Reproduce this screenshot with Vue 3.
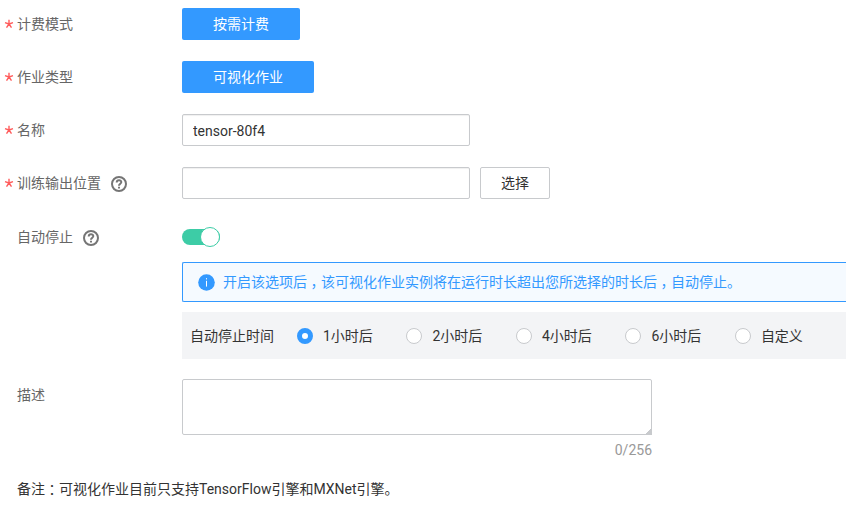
<script setup>
import { ref } from 'vue'

const name = ref('tensor-80f4')
const output = ref('')
const desc = ref('')
const stop = ref('1')
const options = [
  { value: '1', label: '1小时后' },
  { value: '2', label: '2小时后' },
  { value: '4', label: '4小时后' },
  { value: '6', label: '6小时后' },
  { value: 'custom', label: '自定义' },
]
</script>

<template>
  <main class="form">
    <div class="row">
      <div class="label"><svg class="star" viewBox="0 0 10 10"><path d="M5 5V.8M5 5L1 3.7M5 5L9 3.7M5 5L2.5 8.6M5 5L7.5 8.6" /></svg>计费模式</div>
      <button class="primary">按需计费</button>
    </div>
    <div class="row">
      <div class="label"><svg class="star" viewBox="0 0 10 10"><path d="M5 5V.8M5 5L1 3.7M5 5L9 3.7M5 5L2.5 8.6M5 5L7.5 8.6" /></svg>作业类型</div>
      <button class="primary">可视化作业</button>
    </div>
    <div class="row">
      <div class="label"><svg class="star" viewBox="0 0 10 10"><path d="M5 5V.8M5 5L1 3.7M5 5L9 3.7M5 5L2.5 8.6M5 5L7.5 8.6" /></svg>名称</div>
      <input v-model="name" class="input" />
    </div>
    <div class="row">
      <div class="label"><svg class="star" viewBox="0 0 10 10"><path d="M5 5V.8M5 5L1 3.7M5 5L9 3.7M5 5L2.5 8.6M5 5L7.5 8.6" /></svg>训练输出位置
        <svg class="help" viewBox="0 0 16 16"><circle cx="8" cy="8" r="7" /><path d="M5.7 6.5C5.7 3.3 10.4 3.5 10.3 6.3C10.2 7.7 8 7.8 8 9.7M8 10.8V12.6" /></svg>
      </div>
      <input v-model="output" class="input" />
      <button class="plain">选择</button>
    </div>
    <div class="row auto">
      <div class="label optional">自动停止
        <svg class="help" viewBox="0 0 16 16"><circle cx="8" cy="8" r="7" /><path d="M5.7 6.5C5.7 3.3 10.4 3.5 10.3 6.3C10.2 7.7 8 7.8 8 9.7M8 10.8V12.6" /></svg>
      </div>
      <div class="switch"><span class="knob"></span></div>
    </div>
    <div class="notice">
      <svg class="info" viewBox="0 0 17 17"><circle cx="8.5" cy="8.5" r="8.3" /><path d="M8.5 4.2V5.4M8.5 6.8V12.6" /></svg>
      <span>开启该选项后<i class="mark">，</i>该可视化作业实例将在运行时长超出您所选择的时长后<i class="mark">，</i>自动停止。</span>
    </div>
    <div class="times">
      <span class="times-title">自动停止时间</span>
      <label v-for="o in options" :key="o.value" class="option" @click="stop = o.value">
        <span class="radio" :class="{ on: stop === o.value }"></span>{{ o.label }}
      </label>
    </div>
    <div class="row desc">
      <div class="label optional">描述</div>
      <div class="area-wrap">
        <div class="area-box">
          <textarea v-model="desc" class="area"></textarea>
          <span class="grip"></span>
        </div>
        <div class="count">{{ desc.length }}/256</div>
      </div>
    </div>
    <p class="remark">备注<i class="mark">：</i>可视化作业目前只支持TensorFlow引擎和MXNet引擎。</p>
  </main>
</template>

<style>
body { margin: 0; background: #fff; overflow: hidden; }
</style>

<style scoped>
.form {
  box-sizing: border-box;
  width: 846px;
  height: 516px;
  padding-top: 8px;
  overflow: hidden;
  font: 14px/20px Roboto, "Noto Sans CJK SC", sans-serif;
  color: #333;
}
* { box-sizing: border-box; }
button, input, textarea { font: inherit; color: inherit; margin: 0; outline: none; }
i { font-style: normal; }
.row { display: flex; align-items: center; height: 32px; margin-bottom: 21px; }
.label { display: flex; align-items: center; width: 182px; padding-left: 4px; color: #666; flex: none; }
.optional { padding-left: 17px; }
.star { width: 10px; height: 10px; margin-right: 3px; fill: none; stroke: #ff5c5c; stroke-width: 1.4; }
.help { width: 16px; height: 16px; margin: 1px 0 0 10px; fill: none; stroke: #757575; stroke-width: 2; }
.primary { height: 32px; padding: 0 31px; border: 0; border-radius: 2px; background: #3399ff; color: #fff; }
.input { width: 288px; height: 32px; padding: 2px 10px 0; border: 1px solid #c8cacd; border-radius: 2px; background: #fff; box-shadow: inset 0 1px 1px #f0f0f0; }
.plain { width: 70px; height: 32px; margin-left: 10px; padding: 0; border: 1px solid #c8cacd; border-radius: 2px; background: #fff; }
.auto { height: 34px; margin-bottom: 8px; }
.switch { display: flex; align-items: center; justify-content: flex-end; width: 38px; height: 16px; border-radius: 8px; background: #3dcca6; }
.knob { width: 20px; height: 20px; flex: none; border: 1px solid #3dcca6; border-radius: 50%; background: #fff; }
.notice { display: flex; align-items: center; height: 40px; margin-left: 182px; padding-left: 15px; border: 1px solid #3399ff; border-right: 0; border-radius: 2px 0 0 2px; background: #f5faff; color: #3399ff; white-space: nowrap; }
.info { width: 17px; height: 17px; margin-right: 8px; fill: #3399ff; }
.info path { stroke: #fff; stroke-width: 1; }
.mark { display: inline-block; width: 14px; text-align: center; font-family: "Noto Sans CJK SC", sans-serif; font-feature-settings: "halt"; line-height: 14px; }
.times { display: flex; align-items: center; height: 47px; margin: 10px 0 20px 182px; padding-left: 8px; background: #f3f4f6; white-space: nowrap; }
.times-title { margin-right: 23px; }
.option { display: flex; align-items: center; margin-right: 33.6px; }
.radio { width: 16px; height: 16px; margin-right: 10px; border: 1px solid #c8cacd; border-radius: 50%; background: #fff; }
.radio.on { border: 5px solid #3399ff; }
.desc { align-items: flex-start; height: 82px; margin: 0; }
.desc .label { padding-top: 6px; }
.area-wrap { width: 470px; }
.area-box { position: relative; height: 56px; }
.area { display: block; width: 470px; height: 56px; padding: 6px 10px; border: 1px solid #c8cacd; border-radius: 2px; resize: none; background: #fff; }
.grip { position: absolute; right: 0; bottom: 0; width: 7px; height: 7px; background: linear-gradient(135deg, transparent 48%, #c8cacd 50%); }
.count { margin-top: 5px; text-align: right; color: #999; }
.remark { margin: 18px 0 0 17px; white-space: nowrap; }
</style>
